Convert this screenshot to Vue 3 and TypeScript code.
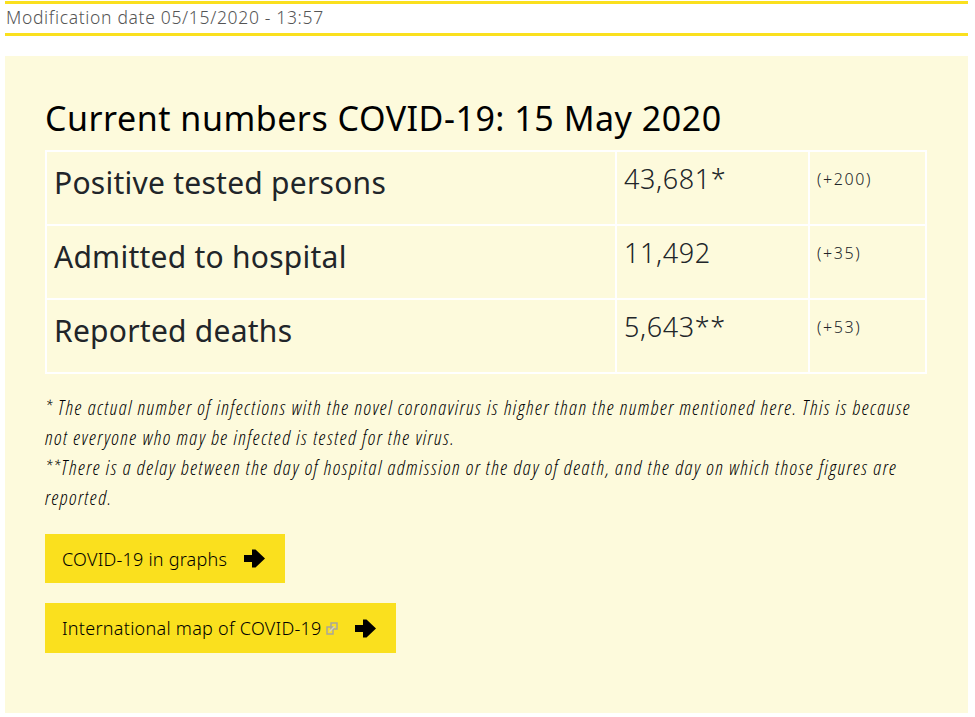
<script setup lang="ts">
interface Row { label: string; value: string; delta: string }
const rows: Row[] = [
  { label: 'Positive tested persons', value: '43,681*', delta: '(+200)' },
  { label: 'Admitted to hospital', value: '11,492', delta: '(+35)' },
  { label: 'Reported deaths', value: '5,643**', delta: '(+53)' },
]
</script>

<template>
  <div class="page">
    <div class="modified">Modification date 05/15/2020 - 13:57</div>
    <section class="panel">
      <h2 class="title">Current numbers COVID-19: 15 May 2020</h2>
      <table class="numbers">
        <tbody>
          <tr v-for="r in rows" :key="r.label">
            <td class="label">{{ r.label }}</td>
            <td class="value">{{ r.value }}</td>
            <td class="delta">{{ r.delta }}</td>
          </tr>
        </tbody>
      </table>
      <p class="note">* The actual number of infections with the novel coronavirus is higher than the number mentioned here. This is because not everyone who may be infected is tested for the virus.<br>**There is a delay between the day of hospital admission or the day of death, and the day on which those figures are reported.</p>
      <a class="btn first">
        <span>COVID-19 in graphs</span>
        <svg class="arrow" width="21" height="19" viewBox="0 0 21 19"><path d="M0 6h8V0.500h3.500l9.500 9-9.500 9H8V13H0z" fill="#000"/></svg>
      </a>
      <a class="btn second">
        <span>International map of COVID-19</span>
        <svg class="ext" width="12" height="13" viewBox="0 0 12 13" fill="none" stroke="#a9a69a" stroke-width="1.500"><path d="M1 5h6v7H1z"/><path d="M5 1h6v6H5z"/><path d="M3.500 9.500l5-5" stroke="#d4d2c6"/></svg>
        <svg class="arrow" width="21" height="19" viewBox="0 0 21 19"><path d="M0 6h8V0.500h3.500l9.500 9-9.500 9H8V13H0z" fill="#000"/></svg>
      </a>
    </section>
  </div>
</template>

<style scoped>
.page {
  width: 975px;
  height: 717px;
  overflow: hidden;
  padding: 1px 0 0 5px;
  box-sizing: border-box;
  font-family: "Noto Sans", sans-serif;
  background: #fff;
}
.modified {
  width: 962px;
  height: 29px;
  border-top: 3px solid #fae01e;
  border-bottom: 3px solid #fae01e;
  color: #555;
  font-size: 17.5px;
  font-weight: 300;
  letter-spacing: 0.67px;
  line-height: 27px;
  padding-left: 1px;
}
.panel {
  width: 963px;
  height: 657px;
  margin-top: 20px;
  padding: 40px 41px 0 40px;
  box-sizing: border-box;
  background: #fdfadc;
}
.title {
  margin: 0;
  font-size: 34px;
  font-weight: 400;
  letter-spacing: 0.52px;
  line-height: 44px;
  color: #000;
}
.numbers {
  width: 882px;
  margin-top: 10px;
  border-collapse: collapse;
  border: 2px solid #fff;
  color: #212529;
  table-layout: fixed;
}
.numbers td {
  border: 2px solid #fff;
  height: 74px;
  padding: 8px 7px 0;
  vertical-align: top;
  box-sizing: border-box;
}
.label { width: 570px; font-size: 30px; line-height: 46px; letter-spacing: 0.25px; }
.value { width: 193px; font-size: 27px; line-height: 38px; font-weight: 300; letter-spacing: 0.6px; }
.delta { font-size: 16px; line-height: 38px; font-weight: 300; letter-spacing: 1.6px; }
.note {
  margin: 19px 0 21px;
  font-family: "Open Sans", sans-serif;
  font-stretch: 87%;
  font-style: italic;
  font-weight: 300;
  font-size: 20px;
  letter-spacing: 1.43px;
  line-height: 30px;
  color: #000;
}
.btn {
  display: flex;
  align-items: center;
  width: fit-content;
  background: #fae01e;
  color: #000;
  font-size: 18px;
  font-weight: 300;
  letter-spacing: 0.22px;
  padding: 0 20px 0 17px;
}
.first { height: 49px; }
.second { height: 50px; margin-top: 20px; letter-spacing: 0.27px; }
.arrow { margin-left: 17px; flex: none; }
.ext { margin-left: 4px; flex: none; }
</style>

<style>
html, body { margin: 0; padding: 0; background: #fff; }
</style>
